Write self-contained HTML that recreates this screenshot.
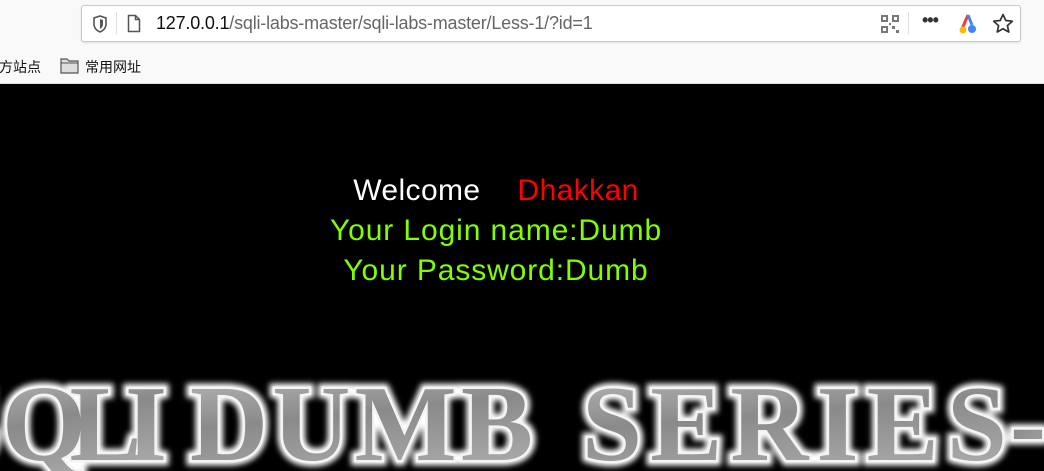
<!DOCTYPE html>
<html><head><meta charset="utf-8"><style>
body{margin:0;width:1044px;height:471px;overflow:hidden;background:#000;font-family:"Liberation Sans","Noto Sans CJK SC",sans-serif}
.top{position:absolute;left:0;top:0;width:1044px;height:83px;background:#f9f9fa;border-bottom:1px solid #e0e0e0}
.url{position:absolute;left:81px;top:5px;width:938px;height:35px;background:#fff;border:1px solid #c8c8c8;border-radius:3px;box-shadow:0 1px 2px rgba(0,0,0,.1)}
.url .t{position:absolute;left:74px;top:7px;font-size:18px;color:#666;letter-spacing:-0.2px}
.url .t b{font-weight:normal;color:#111}
.bm{position:absolute;top:57px;font-size:14px;color:#111}
.msg{position:absolute;left:0;width:992px;text-align:center;font-size:30px;line-height:40px;letter-spacing:0.9px}
</style></head><body>
<div class="top">
 <div class="url">
  <svg style="position:absolute;left:10px;top:9px" width="16" height="18" viewBox="0 0 16 18"><path d="M8 1 L14 3 V9 C14 13 11 16 8 17 C5 16 2 13 2 9 V3 Z" fill="none" stroke="#555" stroke-width="1.6"/><path d="M8 4 L11 5 V9 C11 11 10 13 8 14 Z" fill="#555"/></svg>
  <div style="position:absolute;left:34px;top:6px;width:1px;height:22px;background:#ddd"></div>
  <svg style="position:absolute;left:45px;top:8px" width="14" height="19" viewBox="0 0 14 19"><path d="M1.5 1.5 H8.5 L12.5 5.5 V17.5 H1.5 Z M8.5 1.5 V5.5 H12.5" fill="none" stroke="#555" stroke-width="1.5"/></svg>
  <div class="t"><b>127.0.0.1</b>/sqli-labs-master/sqli-labs-master/Less-1/?id=1</div>
  <svg style="position:absolute;left:799px;top:9px" width="18" height="18" viewBox="0 0 18 18" fill="#777"><rect x="0" y="0" width="7" height="7"/><rect x="11" y="0" width="7" height="7"/><rect x="0" y="11" width="7" height="7"/><rect x="11" y="11" width="3" height="3"/><rect x="15" y="15" width="3" height="3"/><rect x="8" y="8" width="2" height="2"/><rect x="2" y="2" width="3" height="3" fill="#fff"/><rect x="13" y="2" width="3" height="3" fill="#fff"/><rect x="2" y="13" width="3" height="3" fill="#fff"/></svg>
  <div style="position:absolute;left:826px;top:6px;width:1px;height:22px;background:#ddd"></div>
  <div style="position:absolute;left:840px;top:4px;font-size:18px;color:#333;font-weight:bold;letter-spacing:-1px">•••</div>
  <svg style="position:absolute;left:876px;top:7px" width="20" height="22" viewBox="0 0 20 22"><path d="M10 2 L4 16" stroke="#e94235" stroke-width="3"/><circle cx="5" cy="17" r="3.5" fill="#fbbc05"/><circle cx="14" cy="16" r="4" fill="#4285f4"/><path d="M10 2 L14 12" stroke="#4285f4" stroke-width="3"/></svg>
  <svg style="position:absolute;left:910px;top:7px" width="22" height="21" viewBox="0 0 22 21"><path d="M11 1.5 L13.8 7.5 L20.3 8.2 L15.4 12.6 L16.8 19 L11 15.7 L5.2 19 L6.6 12.6 L1.7 8.2 L8.2 7.5 Z" fill="none" stroke="#333" stroke-width="1.7" stroke-linejoin="round"/></svg>
 </div>
 <div class="bm" style="left:-1px">方站点</div>
 <svg style="position:absolute;left:60px;top:57px" width="19" height="17" viewBox="0 0 19 17"><path d="M1 2 H7 L9 4 H18 V16 H1 Z" fill="#ddd" stroke="#555" stroke-width="1.2"/><path d="M1 6 H18" stroke="#555" stroke-width="1"/></svg>
 <div class="bm" style="left:85px">常用网址</div>
</div>
<div class="msg" style="top:171px;letter-spacing:0.4px"><span style="color:#fff">Welcome</span><span style="display:inline-block;width:37px"></span><span style="color:#f00">Dhakkan</span></div>
<div class="msg" style="top:211px;color:#7fff00">Your Login name:Dumb</div>
<div class="msg" style="top:251px;color:#7fff00">Your Password:Dumb</div>
<svg style="position:absolute;left:0;top:360px" width="1044" height="111">
 <defs>
  <linearGradient id="g" x1="0" y1="0" x2="0.3" y2="1"><stop offset="0" stop-color="#bdbdbd"/><stop offset="0.5" stop-color="#8a8a8a"/><stop offset="1" stop-color="#a8a8a8"/></linearGradient>
  <filter id="f"><feGaussianBlur stdDeviation="3"/></filter>
  <g id="w" font-family="Liberation Serif,serif" font-weight="bold" font-size="108" lengthAdjust="spacingAndGlyphs">
   <text x="-60" y="100" textLength="58">S</text>
   <text x="2" y="100" textLength="165">QLI</text>
   <text x="190" y="100" textLength="343">DUMB</text>
   <text x="582" y="100" textLength="425">SERIES</text>
   <text x="1010" y="100" textLength="45">-</text>
  </g>
 </defs>
 <use href="#w" fill="none" stroke="#fff" stroke-width="11" filter="url(#f)"/>
 <use href="#w" fill="url(#g)" stroke="#f4f4f4" stroke-width="5"/>
 <use href="#w" fill="url(#g)"/>
</svg>
</body></html>
